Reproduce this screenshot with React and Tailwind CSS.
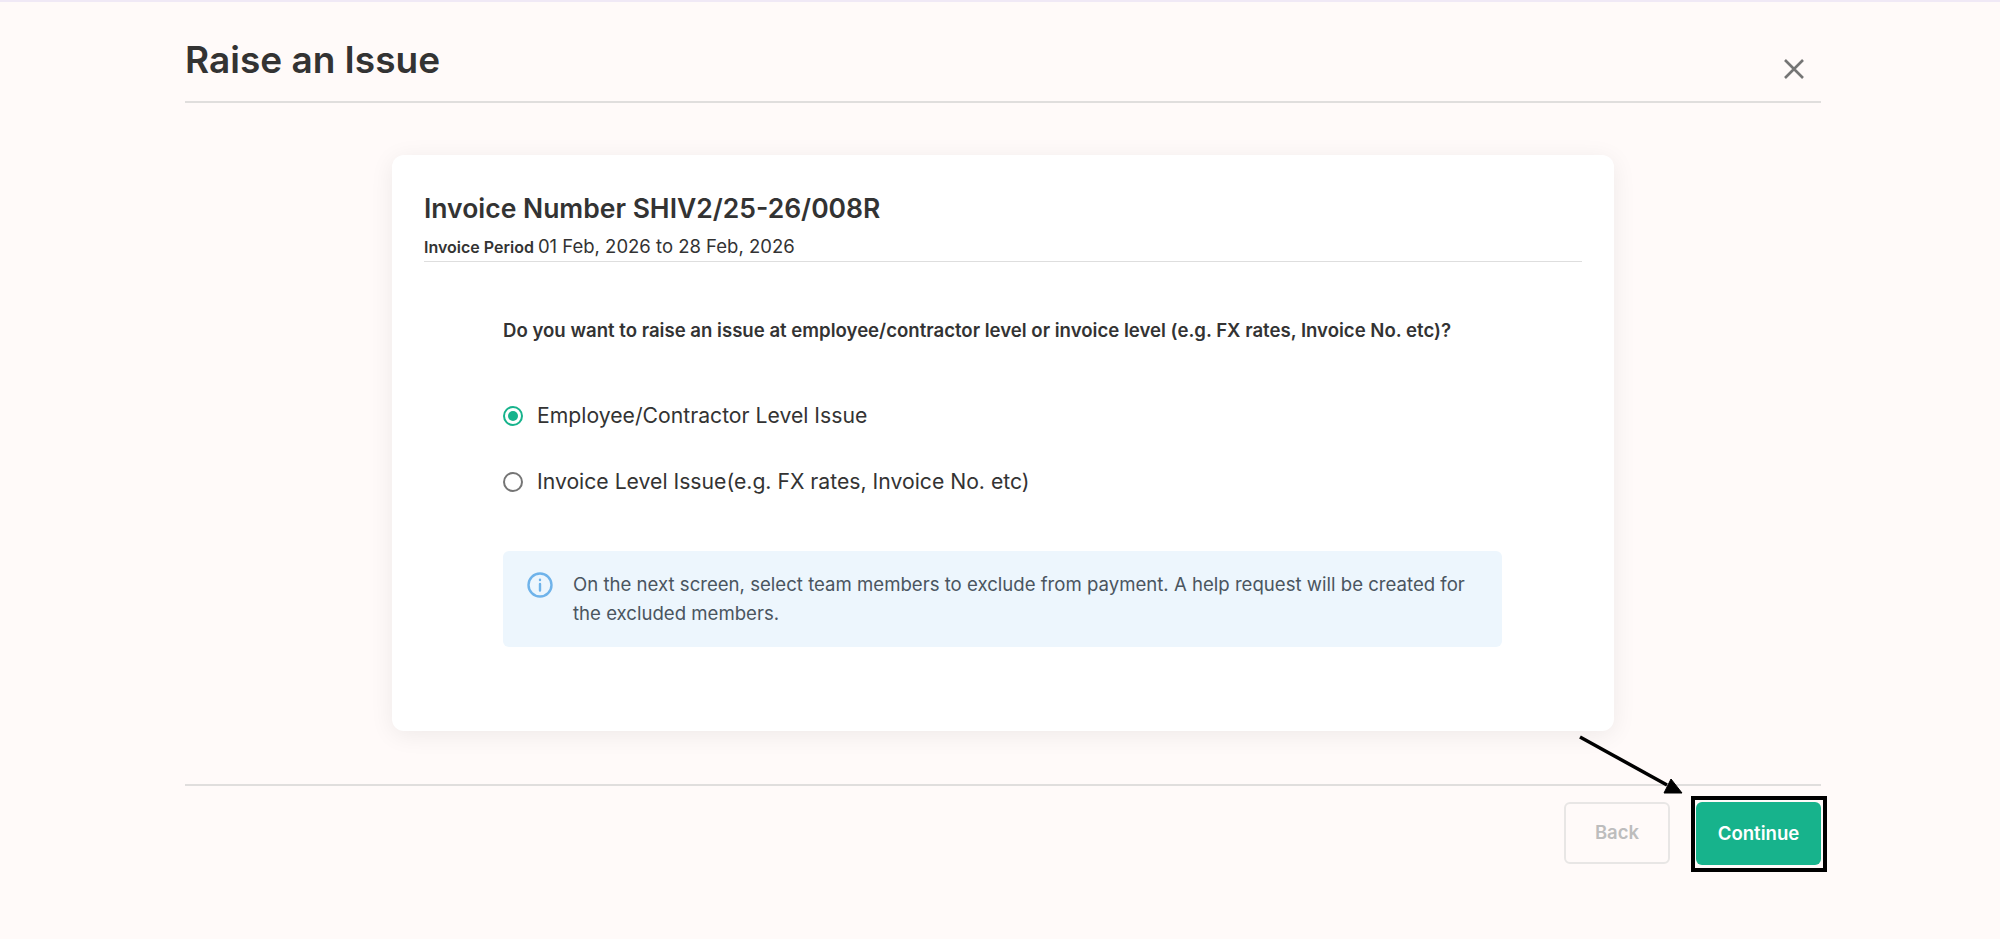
export default function App() {
  return (
    <div className="relative h-[939px] w-[2000px] overflow-hidden bg-[#fffaf9] font-['Inter',sans-serif] text-[#333333]">
      <div className="h-[2px] bg-[#f0e9f6]" />
      <div className="mr-[179px] ml-[185px] flex flex-col">
        <header className="flex h-[101px] items-start justify-between border-b-2 border-[#e0dedd]">
          <h1 className="mt-[33px] text-[37px] leading-[50px] font-semibold">Raise an Issue</h1>
          <svg className="mt-[56px] mr-[16px]" width="22" height="22" viewBox="0 0 22 22" fill="none" stroke="#757575" strokeWidth="2.6">
            <path d="M2 2 L20 20 M20 2 L2 20" />
          </svg>
        </header>

        <main className="mt-[52px] ml-[207px] flex h-[576px] w-[1222px] flex-col rounded-xl bg-white px-8 pt-[31px] shadow-[0_4px_24px_rgba(0,0,0,0.07)]">
          <div className="flex h-[76px] flex-col border-b border-[#dedede]">
            <h2 className="text-[26.5px] leading-[44px] font-semibold">Invoice Number SHIV2/25-26/008R</h2>
            <p className="mt-[4px] flex items-baseline gap-1 leading-6">
              <span className="text-[16px] font-semibold">Invoice Period</span>
              <span className="text-[18.5px]">01 Feb, 2026 to 28 Feb, 2026</span>
            </p>
          </div>

          <div className="ml-[79px] flex w-[999px] flex-col">
            <p className="mt-[54px] text-[18.6px] leading-[28px] font-semibold">
              Do you want to raise an issue at employee/contractor level or invoice level (e.g. FX rates, Invoice No. etc)?
            </p>

            <div className="mt-[57px] flex flex-col gap-[36px]">
              <label className="flex h-[30px] items-center gap-[14px] text-[21.2px]">
                <span className="flex h-5 w-5 items-center justify-center rounded-full border-2 border-[#17b38c]">
                  <span className="h-[10px] w-[10px] rounded-full bg-[#17b38c]" />
                </span>
                Employee/Contractor Level Issue
              </label>
              <label className="flex h-[30px] items-center gap-[14px] text-[21.2px]">
                <span className="h-5 w-5 rounded-full border-2 border-[#757575]" />
                Invoice Level Issue(e.g. FX rates, Invoice No. etc)
              </label>
            </div>

            <div className="mt-[54px] flex h-[96px] gap-[20px] rounded-md bg-[#edf6fd] px-6 py-[19px]">
              <svg className="mt-[2px] shrink-0" width="26" height="26" viewBox="0 0 26 26" fill="none" stroke="#6fb3ea" strokeWidth="2.4" strokeLinecap="round">
                <circle cx="13" cy="13" r="11.5" />
                <path d="M13 12 V18.5 M13 7.8 V8" />
              </svg>
              <p className="text-[18.6px] leading-[29px] text-[#4a5560]">
                On the next screen, select team members to exclude from payment. A help request will be created for the excluded members.
              </p>
            </div>
          </div>
        </main>

        <footer className="mt-[53px] flex justify-end gap-[26px] border-t-2 border-[#e0dedd] pt-[16px]">
          <button className="h-[62px] w-[106px] rounded-md border-2 border-[#e8e6e5] text-[18.5px] font-semibold text-[#bdbdbd]">Back</button>
          <button className="h-[63px] w-[125px] rounded-md bg-[#17b38c] text-[18.6px] font-semibold text-white">Continue</button>
        </footer>
      </div>

      {/* annotation overlay */}
      <div className="absolute top-[796px] left-[1691px] h-[76px] w-[136px] border-[4px] border-black" />
      <svg className="absolute top-0 left-0" width="2000" height="939" fill="none">
        <path d="M1580 737 L1667 785" stroke="#000" strokeWidth="3.5" />
        <path d="M1664 793 L1682 793 L1671 779 Z" fill="#000" stroke="#000" strokeWidth="1" />
      </svg>
    </div>
  );
}
